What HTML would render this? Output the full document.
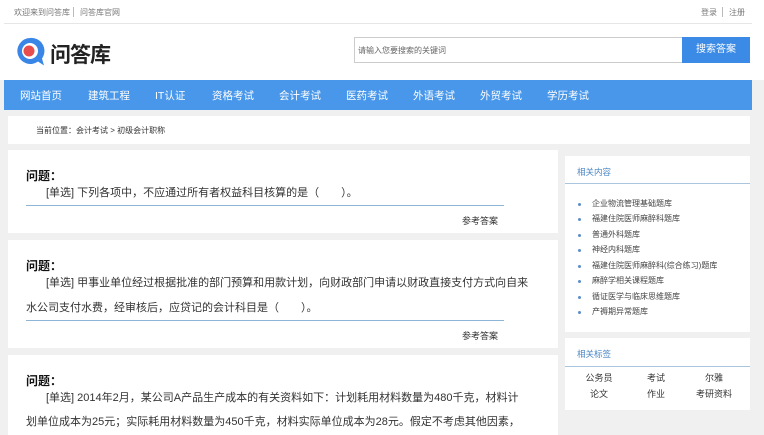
<!DOCTYPE html>
<html><head><meta charset="utf-8"><style>
*{margin:0;padding:0;box-sizing:border-box}
body{width:764px;height:435px;overflow:hidden;background:#f0f0f0;font-family:"Liberation Sans","Noto Sans CJK SC",sans-serif;position:relative}
.abs{position:absolute}
.top{left:0;top:0;width:764px;height:80px;background:#fff}
.small{font-size:8px;color:#777;white-space:nowrap}
.nav{left:4px;top:80px;width:748px;height:30px;background:#4897ea}
.nav span{position:absolute;top:8px;color:#fff;font-size:10.5px;white-space:nowrap}
.card{background:#fff}
.q{font-size:12px;font-weight:bold;color:#111}
.t{font-size:11px;color:#333;white-space:nowrap}
.ul{height:1px;background:#8fb5d6}
.ans{font-size:9px;color:#333}
.li{font-size:8px;color:#444;white-space:nowrap}
.dot{width:3px;height:3px;background:#5b8fc8;border-radius:50%}
.tag{font-size:9px;color:#333;width:60px;text-align:center}
</style></head><body>
<div class="abs top"></div>
<div class="abs small" style="left:14px;top:7px">欢迎来到问答库</div>
<div class="abs" style="left:73px;top:7px;width:1px;height:10px;background:#bbb"></div>
<div class="abs small" style="left:80px;top:7px">问答库官网</div>
<div class="abs small" style="left:701px;top:7px">登录</div>
<div class="abs" style="left:722px;top:7px;width:1px;height:10px;background:#bbb"></div>
<div class="abs small" style="left:729px;top:7px">注册</div>
<div class="abs" style="left:4px;top:23px;width:748px;height:1px;background:#e6e6e6"></div>
<svg class="abs" style="left:16px;top:37px" width="30" height="30" viewBox="0 0 30 30">
<path d="M14 1a13 13 0 1 0 8 23.5l6 4-2-7A13 13 0 0 0 14 1z" fill="#3a86e6"/>
<circle cx="14" cy="14" r="8" fill="#fff"/><circle cx="13" cy="14" r="5.5" fill="#e84d4d"/>
</svg>
<div class="abs" style="left:50px;top:39px;font-size:21px;font-weight:bold;color:#222;letter-spacing:-1px">问答库</div>
<div class="abs" style="left:354px;top:37px;width:329px;height:26px;border:1px solid #ccc;background:#fff"></div>
<div class="abs small" style="left:358px;top:45px;color:#666">请输入您要搜索的关键词</div>
<div class="abs" style="left:682px;top:37px;width:68px;height:26px;background:#3a8ae6;color:#fff;font-size:10px;text-align:center;line-height:26px">搜索答案</div>
<div class="abs nav">
<span style="left:16px">网站首页</span><span style="left:84px">建筑工程</span><span style="left:151px">IT认证</span><span style="left:208px">资格考试</span><span style="left:275px">会计考试</span><span style="left:342px">医药考试</span><span style="left:409px">外语考试</span><span style="left:476px">外贸考试</span><span style="left:543px">学历考试</span>
</div>
<div class="abs card" style="left:8px;top:116px;width:742px;height:28px"></div>
<div class="abs small" style="left:36px;top:125px;color:#333">当前位置：会计考试 > 初级会计职称</div>

<div class="abs card" style="left:8px;top:150px;width:550px;height:83px"></div>
<div class="abs q" style="left:26px;top:167px">问题：</div>
<div class="abs t" style="left:46px;top:184px">[单选] 下列各项中，不应通过所有者权益科目核算的是（　　）。</div>
<div class="abs ul" style="left:26px;top:205px;width:478px"></div>
<div class="abs ans" style="left:462px;top:214px">参考答案</div>

<div class="abs card" style="left:8px;top:240px;width:550px;height:108px"></div>
<div class="abs q" style="left:26px;top:257px">问题：</div>
<div class="abs t" style="left:46px;top:274px">[单选] 甲事业单位经过根据批准的部门预算和用款计划，向财政部门申请以财政直接支付方式向自来</div>
<div class="abs t" style="left:26px;top:299px">水公司支付水费，经审核后，应贷记的会计科目是（　　）。</div>
<div class="abs ul" style="left:26px;top:320px;width:478px"></div>
<div class="abs ans" style="left:462px;top:329px">参考答案</div>

<div class="abs card" style="left:8px;top:355px;width:550px;height:80px"></div>
<div class="abs q" style="left:26px;top:372px">问题：</div>
<div class="abs t" style="left:46px;top:389px">[单选] 2014年2月，某公司A产品生产成本的有关资料如下：计划耗用材料数量为480千克，材料计</div>
<div class="abs t" style="left:26px;top:413px">划单位成本为25元；实际耗用材料数量为450千克，材料实际单位成本为28元。假定不考虑其他因素，</div>

<div class="abs card" style="left:565px;top:156px;width:185px;height:176px"></div>
<div class="abs small" style="left:577px;top:166px;color:#4a86c5;font-size:8.5px">相关内容</div>
<div class="abs ul" style="left:565px;top:183px;width:185px;background:#a9c6de"></div>
<div class="abs dot" style="left:578px;top:203px"></div><div class="abs li" style="left:592px;top:198px">企业物流管理基础题库</div>
<div class="abs dot" style="left:578px;top:218px"></div><div class="abs li" style="left:592px;top:213px">福建住院医师麻醉科题库</div>
<div class="abs dot" style="left:578px;top:234px"></div><div class="abs li" style="left:592px;top:229px">普通外科题库</div>
<div class="abs dot" style="left:578px;top:249px"></div><div class="abs li" style="left:592px;top:244px">神经内科题库</div>
<div class="abs dot" style="left:578px;top:265px"></div><div class="abs li" style="left:592px;top:260px">福建住院医师麻醉科(综合练习)题库</div>
<div class="abs dot" style="left:578px;top:280px"></div><div class="abs li" style="left:592px;top:275px">麻醉学相关课程题库</div>
<div class="abs dot" style="left:578px;top:296px"></div><div class="abs li" style="left:592px;top:291px">循证医学与临床思维题库</div>
<div class="abs dot" style="left:578px;top:311px"></div><div class="abs li" style="left:592px;top:306px">产褥期异常题库</div>

<div class="abs card" style="left:565px;top:338px;width:185px;height:72px"></div>
<div class="abs small" style="left:577px;top:348px;color:#4a86c5;font-size:8.5px">相关标签</div>
<div class="abs ul" style="left:565px;top:366px;width:185px;background:#a9c6de"></div>
<div class="abs tag" style="left:569px;top:371px">公务员</div>
<div class="abs tag" style="left:626px;top:371px">考试</div>
<div class="abs tag" style="left:684px;top:371px">尔雅</div>
<div class="abs tag" style="left:569px;top:387px">论文</div>
<div class="abs tag" style="left:626px;top:387px">作业</div>
<div class="abs tag" style="left:684px;top:387px">考研资料</div>
</body></html>
